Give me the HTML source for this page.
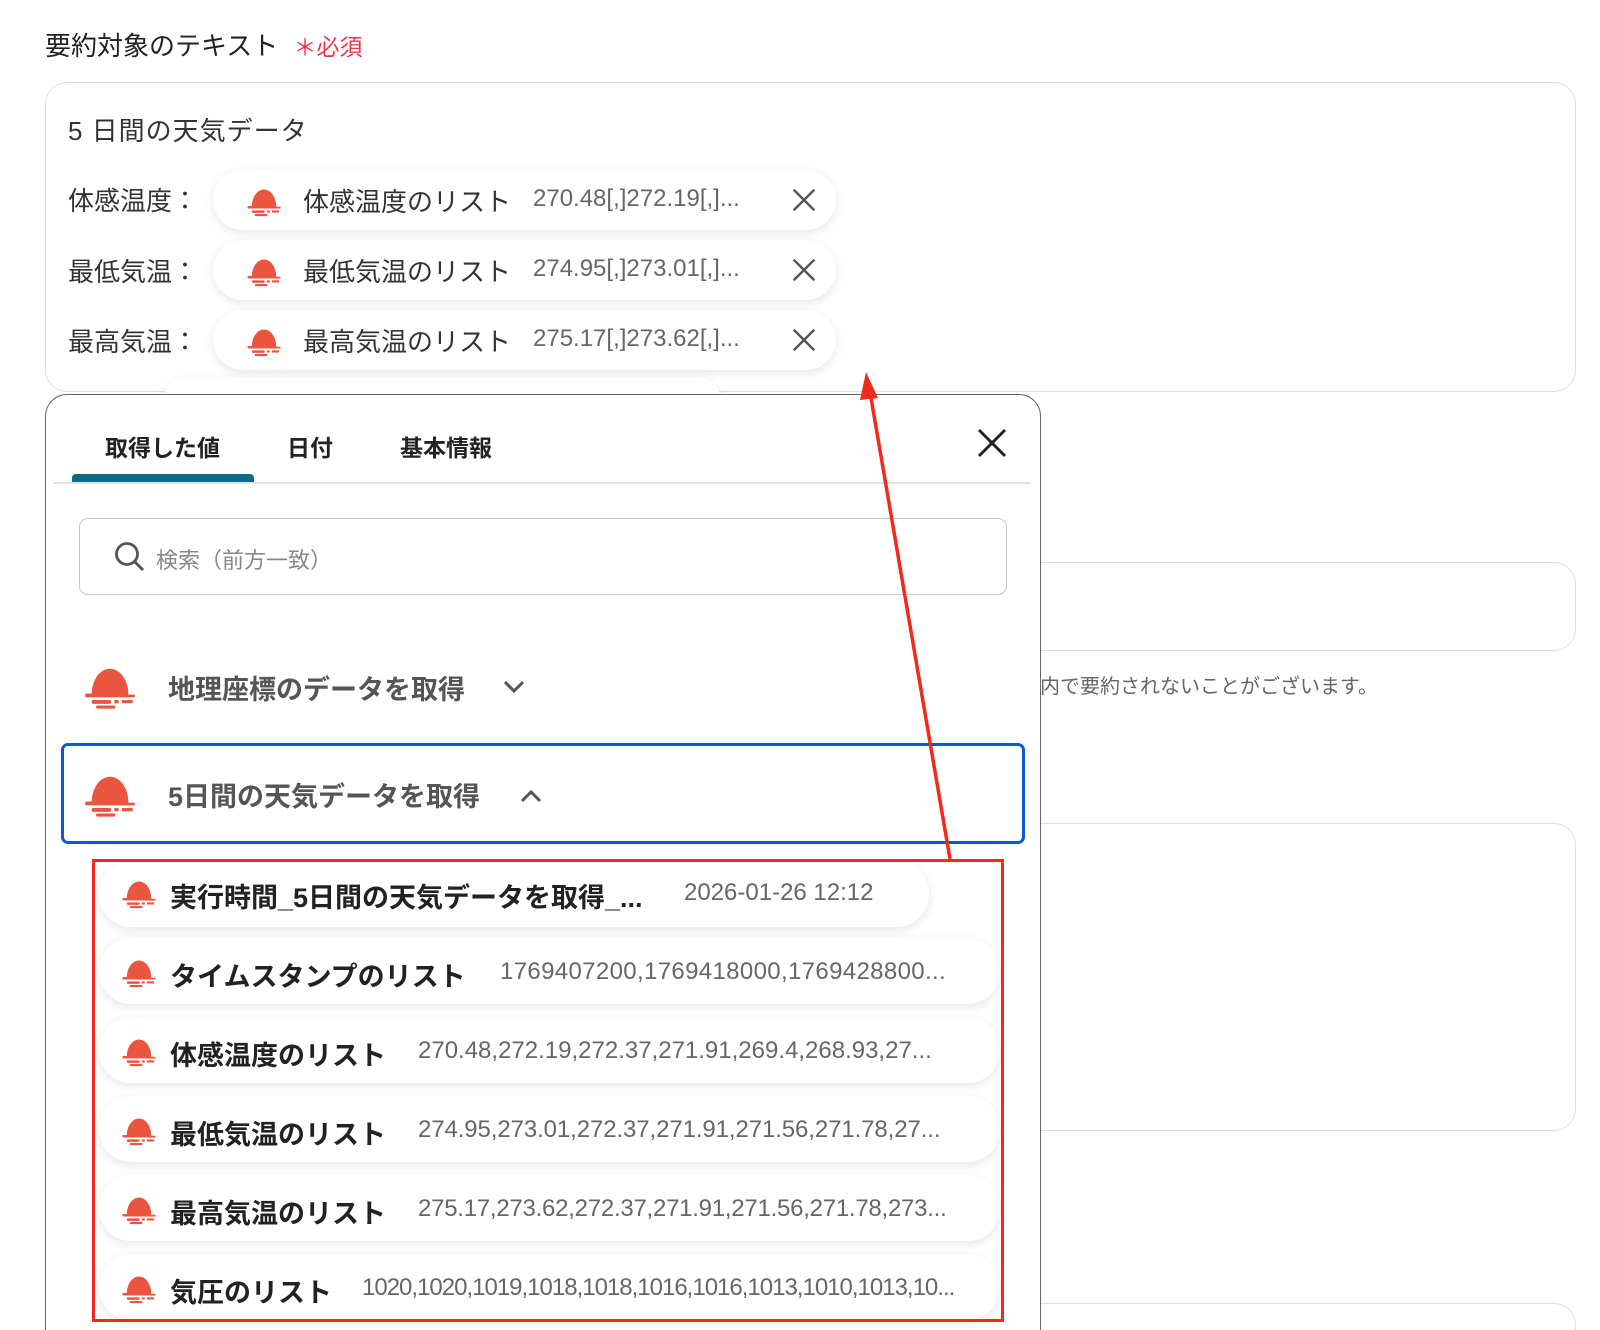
<!DOCTYPE html>
<html><head><meta charset="utf-8"><style>
*{margin:0;padding:0;box-sizing:border-box}
html,body{width:1600px;height:1330px;overflow:hidden}
body{background:#fff;font-family:"Liberation Sans","Noto Sans CJK JP",sans-serif;color:#222}
#w{position:relative;width:1600px;height:1330px;overflow:hidden}
.a{position:absolute;white-space:nowrap}
.box{position:absolute;border:1.5px solid #dedfe3;border-radius:22px;background:#fff}
.chip{position:absolute;background:#fff;border-radius:32px;box-shadow:0 3px 10px rgba(0,0,0,0.10)}
.lbl{font-size:26px;color:#333}
.val{font-size:24px;color:#666}
.ic{position:absolute}
</style></head><body><div id="w">
<svg width="0" height="0" style="position:absolute"><defs>
<symbol id="sun" viewBox="0 0 50 44"><path d="M8 30 C8 16 16 6 25 6 C34 6 42 16 42 30 Z" fill="#e9553f"/><rect x="2" y="29" width="40" height="3.5" rx="1.5" fill="#e9553f"/><rect x="8" y="35" width="18" height="3.5" rx="1.5" fill="#e9553f"/><rect x="29" y="35" width="4" height="3" fill="#e9553f"/><rect x="36" y="35" width="10" height="3" fill="#e9553f"/><rect x="40" y="30" width="8" height="2.5" fill="#e9553f"/><rect x="12" y="40" width="18" height="3" rx="1.5" fill="#e9553f"/></symbol>
<symbol id="x" viewBox="0 0 30 30"><path d="M4 4L26 26M26 4L4 26" stroke="#555" stroke-width="2.6"/></symbol>
</defs></svg>

<div class="a" style="left:45px;top:26px;font-size:26px;color:#222">要約対象のテキスト <span style="color:#e8384f;font-size:23px;margin-left:8px">＊必須</span></div>

<div class="box" style="left:45px;top:82px;width:1531px;height:310px"></div>
<div class="a" style="left:68px;top:111px;font-size:26px;color:#333;letter-spacing:1px">5 日間の天気データ</div>

<div class="a lbl" style="left:68px;top:181px">体感温度：</div>
<div class="chip" style="left:213px;top:170px;width:623px;height:60px"></div>
<svg class="ic" style="left:246px;top:185px" width="36" height="32"><use href="#sun"/></svg>
<div class="a lbl" style="left:303px;top:182px">体感温度のリスト</div>
<div class="a val" style="left:533px;top:185px">270.48[,]272.19[,]...</div>
<svg class="ic" style="left:790px;top:186px" width="28" height="28"><use href="#x"/></svg>

<div class="a lbl" style="left:68px;top:252px">最低気温：</div>
<div class="chip" style="left:213px;top:240px;width:623px;height:60px"></div>
<svg class="ic" style="left:246px;top:255px" width="36" height="32"><use href="#sun"/></svg>
<div class="a lbl" style="left:303px;top:252px">最低気温のリスト</div>
<div class="a val" style="left:533px;top:255px">274.95[,]273.01[,]...</div>
<svg class="ic" style="left:790px;top:256px" width="28" height="28"><use href="#x"/></svg>

<div class="a lbl" style="left:68px;top:322px">最高気温：</div>
<div class="chip" style="left:213px;top:310px;width:623px;height:60px"></div>
<svg class="ic" style="left:246px;top:325px" width="36" height="32"><use href="#sun"/></svg>
<div class="a lbl" style="left:303px;top:322px">最高気温のリスト</div>
<div class="a val" style="left:533px;top:325px">275.17[,]273.62[,]...</div>
<svg class="ic" style="left:790px;top:326px" width="28" height="28"><use href="#x"/></svg>
<div class="chip" style="left:164px;top:378px;width:556px;height:40px"></div>

<div class="box" style="left:1000px;top:562px;width:576px;height:89px"></div>
<div class="a" style="left:1020px;top:670px;font-size:20px;color:#666">文内で要約されないことがございます。</div>
<div class="box" style="left:1000px;top:823px;width:576px;height:308px"></div>
<div style="position:absolute;left:1000px;top:1303px;width:576px;height:27px;border:1.5px solid #dedfe3;border-bottom:none;border-radius:22px 22px 0 0"></div>

<div style="position:absolute;left:45px;top:394px;width:996px;height:936px;border:1.5px solid #666;border-bottom:none;border-radius:22px 22px 0 0;background:#fff"></div>
<div class="a" style="left:105px;top:429px;font-size:23px;font-weight:bold;color:#222">取得した値</div>
<div class="a" style="left:287px;top:429px;font-size:23px;font-weight:bold;color:#222">日付</div>
<div class="a" style="left:400px;top:429px;font-size:23px;font-weight:bold;color:#222">基本情報</div>
<div style="position:absolute;left:72px;top:474px;width:182px;height:8px;background:#0b6a85;border-radius:4px 4px 0 0"></div>
<div style="position:absolute;left:53px;top:482px;width:978px;height:1.5px;background:#e2e2e2"></div>
<svg class="ic" style="left:976px;top:427px" width="32" height="32"><path d="M3 3L29 29M29 3L3 29" stroke="#222" stroke-width="3"/></svg>

<div style="position:absolute;left:79px;top:518px;width:928px;height:77px;border:1.5px solid #c8c8c8;border-radius:9px"></div>
<svg class="ic" style="left:113px;top:540px" width="34" height="34"><circle cx="14" cy="14" r="10.5" fill="none" stroke="#555" stroke-width="2.8"/><path d="M21.5 21.5L30 30" stroke="#555" stroke-width="3"/></svg>
<div class="a" style="left:156px;top:543px;font-size:22px;color:#888">検索（前方一致）</div>

<svg class="ic" style="left:83px;top:662px" width="54" height="48"><use href="#sun"/></svg>
<div class="a" style="left:168px;top:668px;font-size:27px;font-weight:bold;color:#555">地理座標のデータを取得</div>
<svg class="ic" style="left:502px;top:679px" width="24" height="16"><path d="M3 3L12 12L21 3" fill="none" stroke="#555" stroke-width="3"/></svg>

<div style="position:absolute;left:61px;top:743px;width:964px;height:101px;border:3px solid #0a5bd1;border-radius:7px"></div>
<svg class="ic" style="left:83px;top:770px" width="54" height="48"><use href="#sun"/></svg>
<div class="a" style="left:168px;top:775px;font-size:27px;font-weight:bold;color:#555">5日間の天気データを取得</div>
<svg class="ic" style="left:519px;top:788px" width="24" height="16"><path d="M3 13L12 4L21 13" fill="none" stroke="#555" stroke-width="3"/></svg>

<div class="chip" style="left:99px;top:861px;width:830px;height:66px"></div>
<div class="chip" style="left:99px;top:938px;width:901px;height:66px"></div>
<div class="chip" style="left:99px;top:1017px;width:901px;height:66px"></div>
<div class="chip" style="left:99px;top:1096px;width:901px;height:66px"></div>
<div class="chip" style="left:99px;top:1175px;width:901px;height:66px"></div>
<div class="chip" style="left:99px;top:1254px;width:901px;height:66px"></div>
<div class="chip" style="left:99px;top:1328px;width:901px;height:2px;border-radius:0"></div>

<svg class="ic" style="left:121px;top:877px" width="36" height="32"><use href="#sun"/></svg>
<div class="a" style="left:170px;top:876px;font-size:27px;font-weight:bold">実行時間_5日間の天気データを取得_...</div>
<div class="a val" style="left:684px;top:879px">2026-01-26 12:12</div>

<svg class="ic" style="left:121px;top:956px" width="36" height="32"><use href="#sun"/></svg>
<div class="a" style="left:170px;top:955px;font-size:27px;font-weight:bold">タイムスタンプのリスト</div>
<div class="a val" style="left:500px;top:958px;letter-spacing:0.35px">1769407200,1769418000,1769428800...</div>

<svg class="ic" style="left:121px;top:1035px" width="36" height="32"><use href="#sun"/></svg>
<div class="a" style="left:170px;top:1034px;font-size:27px;font-weight:bold">体感温度のリスト</div>
<div class="a val" style="left:418px;top:1037px">270.48,272.19,272.37,271.91,269.4,268.93,27...</div>

<svg class="ic" style="left:121px;top:1114px" width="36" height="32"><use href="#sun"/></svg>
<div class="a" style="left:170px;top:1113px;font-size:27px;font-weight:bold">最低気温のリスト</div>
<div class="a val" style="left:418px;top:1116px;letter-spacing:-0.1px">274.95,273.01,272.37,271.91,271.56,271.78,27...</div>

<svg class="ic" style="left:121px;top:1193px" width="36" height="32"><use href="#sun"/></svg>
<div class="a" style="left:170px;top:1192px;font-size:27px;font-weight:bold">最高気温のリスト</div>
<div class="a val" style="left:418px;top:1195px;letter-spacing:-0.25px">275.17,273.62,272.37,271.91,271.56,271.78,273...</div>

<svg class="ic" style="left:121px;top:1272px" width="36" height="32"><use href="#sun"/></svg>
<div class="a" style="left:170px;top:1271px;font-size:27px;font-weight:bold">気圧のリスト</div>
<div class="a val" style="left:362px;top:1274px;letter-spacing:-1px">1020,1020,1019,1018,1018,1016,1016,1013,1010,1013,10...</div>

<div style="position:absolute;left:92px;top:859px;width:912px;height:463px;border:3px solid #f02a1c"></div>

<svg class="ic" style="left:0;top:0" width="1600" height="1330"><path d="M950 859L870 392" stroke="#f02a1c" stroke-width="3.5"/><path d="M866 372L878 398L860 400Z" fill="#f02a1c"/></svg>
</div></body></html>
